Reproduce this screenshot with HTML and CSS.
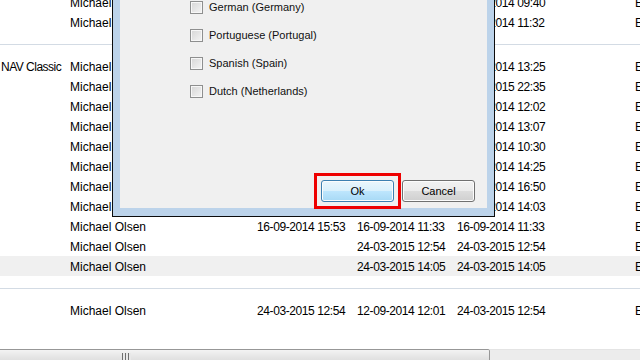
FILE: index.html
```html
<!DOCTYPE html>
<html lang="en">
<head>
    <meta charset="UTF-8">
    <meta name="viewport" content="width=device-width, initial-scale=1.0">
    <title>Languages</title>
    <link rel="stylesheet" href="styles.css">
</head>
<body>
    <div id="page">
        <div id="list">
            <div class="group first">
                <div class="row"><span></span><span>Michael Olsen</span><span></span><span>12-09-2014 09:40</span><span>12-09-2014 09:40</span><span>Export</span></div>
                <div class="row"><span></span><span>Michael Olsen</span><span></span><span>12-09-2014 11:32</span><span>12-09-2014 11:32</span><span>Export</span></div>
            </div>
            <div class="group">
                <div class="row"><span>NAV Classic</span><span>Michael Olsen</span><span></span><span>12-09-2014 13:25</span><span>12-09-2014 13:25</span><span>Export</span></div>
                <div class="row"><span></span><span>Michael Olsen</span><span></span><span>23-03-2015 22:35</span><span>23-03-2015 22:35</span><span>Export</span></div>
                <div class="row"><span></span><span>Michael Olsen</span><span></span><span>15-09-2014 12:02</span><span>15-09-2014 12:02</span><span>Export</span></div>
                <div class="row"><span></span><span>Michael Olsen</span><span></span><span>15-09-2014 13:07</span><span>15-09-2014 13:07</span><span>Export</span></div>
                <div class="row"><span></span><span>Michael Olsen</span><span></span><span>16-09-2014 10:30</span><span>16-09-2014 10:30</span><span>Export</span></div>
                <div class="row"><span></span><span>Michael Olsen</span><span></span><span>16-09-2014 14:25</span><span>16-09-2014 14:25</span><span>Export</span></div>
                <div class="row"><span></span><span>Michael Olsen</span><span></span><span>15-09-2014 16:50</span><span>15-09-2014 16:50</span><span>Export</span></div>
                <div class="row"><span></span><span>Michael Olsen</span><span></span><span>16-09-2014 14:03</span><span>16-09-2014 14:03</span><span>Export</span></div>
                <div class="row"><span></span><span>Michael Olsen</span><span>16-09-2014 15:53</span><span>16-09-2014 11:33</span><span>16-09-2014 11:33</span><span>Export</span></div>
                <div class="row"><span></span><span>Michael Olsen</span><span></span><span>24-03-2015 12:54</span><span>24-03-2015 12:54</span><span>Export</span></div>
                <div class="row selected"><span></span><span>Michael Olsen</span><span></span><span>24-03-2015 14:05</span><span>24-03-2015 14:05</span><span>Export</span></div>
            </div>
            <div class="group">
                <div class="row"><span></span><span>Michael Olsen</span><span>24-03-2015 12:54</span><span>12-09-2014 12:01</span><span>24-03-2015 12:54</span><span>Export</span></div>
            </div>
        </div>
        <div id="hscroll">
            <div class="thumb"><span class="grip"></span></div>
            <div class="track"></div>
        </div>
    </div>

    <div id="dialog">
        <div class="inner">
            <div class="options">
                <label class="opt"><span class="check"></span>Danish (Denmark)</label>
                <label class="opt"><span class="check"></span>English (United States)</label>
                <label class="opt"><span class="check"></span>Swedish (Sweden)</label>
                <label class="opt"><span class="check"></span>Norwegian (Norway)</label>
                <label class="opt"><span class="check"></span>Finnish (Finland)</label>
                <label class="opt"><span class="check"></span>French (France)</label>
                <label class="opt"><span class="check"></span>German (Germany)</label>
                <label class="opt"><span class="check"></span>Portuguese (Portugal)</label>
                <label class="opt"><span class="check"></span>Spanish (Spain)</label>
                <label class="opt"><span class="check"></span>Dutch (Netherlands)</label>
            </div>
            <div class="buttons">
                <div class="marked"><button class="btn ok">Ok</button></div>
                <button class="btn">Cancel</button>
            </div>
        </div>
    </div>
</body>
</html>
```

FILE: styles.css
```css
*{
    margin: 0;
    padding: 0;
    box-sizing: border-box;
}
html, body{
    overflow: hidden;
    height: 360px;
}
body{
    font-family: "Liberation Sans", Arial, sans-serif;
    font-size: 12px;
    color: #000;
    background: #fff;
    position: relative;
}
#page{
    display: flex;
    flex-direction: column;
    height: 366px;
}
#list{
    flex: 1;
    overflow: hidden;
}
.group{
    border-top: 1px solid #d3dbe4;
    margin-top: 12px;
    padding-top: 11px;
}
.group.first{
    border-top: none;
    margin-top: -8px;
    padding-top: 0;
}
.row{
    display: grid;
    grid-template-columns: 70px 187px 100px 100px 178px 1fr;
    height: 20px;
    line-height: 20px;
    white-space: nowrap;
}
.row span{
    overflow: hidden;
    padding-top: 1px;
}
.row span:nth-child(1){
    padding-left: 1px;
    letter-spacing: -0.5px;
}
.row span:nth-child(3),
.row span:nth-child(4),
.row span:nth-child(5){
    letter-spacing: -0.4px;
}
.row.selected{
    background: #f0f0f0;
}

#hscroll{
    display: flex;
    height: 17px;
    flex: none;
}
.thumb{
    width: 490px;
    border: 1px solid #979797;
    border-left: none;
    border-radius: 0 2px 2px 0;
    background: linear-gradient(#f3f3f3, #e4e4e4 50%, #d9d9d9);
    position: relative;
}
.grip{
    position: absolute;
    left: 122px;
    top: 3px;
    width: 9px;
    height: 8px;
    background: repeating-linear-gradient(90deg, #6e6e6e 0 1px, #e8e8e8 1px 3px);
}
.track{
    flex: 1;
    border-top: 1px solid #e4e4e4;
    background: #ececec;
}

#dialog{
    position: absolute;
    left: 112px;
    top: -190px;
    width: 383px;
    border: 1px solid #0c0c0c;
    padding: 7px 7px 8px 7px;
    background: #bcd3ea;
    font-size: 11px;
}
#dialog .inner{
    height: 390px;
    background: #f0f0f0;
    display: flex;
    flex-direction: column;
}
.options{
    flex: 1;
    padding: 15px 0 0 70px;
    display: flex;
    flex-direction: column;
    gap: 15px;
}
.opt{
    display: flex;
    align-items: center;
    gap: 6px;
    height: 13px;
    line-height: 13px;
    color: #111;
}
.check{
    width: 13px;
    height: 13px;
    border: 1px solid #8e8f8f;
    background: linear-gradient(135deg, #d6d6d6, #f4f4f4);
    box-shadow: inset 0 0 0 1px #f7f7f7;
}
.buttons{
    display: flex;
    justify-content: flex-end;
    gap: 8px;
    padding: 0 12px 5px 0;
}
.marked{
    display: flex;
    padding: 4px;
    margin: -7px -7px -6px;
    border: 3px solid #ee0000;
}
.btn{
    width: 73px;
    height: 22px;
    font-family: "Liberation Sans", Arial, sans-serif;
    font-size: 11px;
    color: #000;
    border: 1px solid #707070;
    border-radius: 3px;
    background: linear-gradient(#f2f2f2, #ebebeb 50%, #dddddd 50%, #cfcfcf);
    box-shadow: inset 0 0 0 1px #fcfcfc;
}
.btn.ok{
    border-color: #3c7fb1;
    background: linear-gradient(#eaf6fd, #d9f0fc 50%, #bee6fd 50%, #a7d9f5);
}
```
